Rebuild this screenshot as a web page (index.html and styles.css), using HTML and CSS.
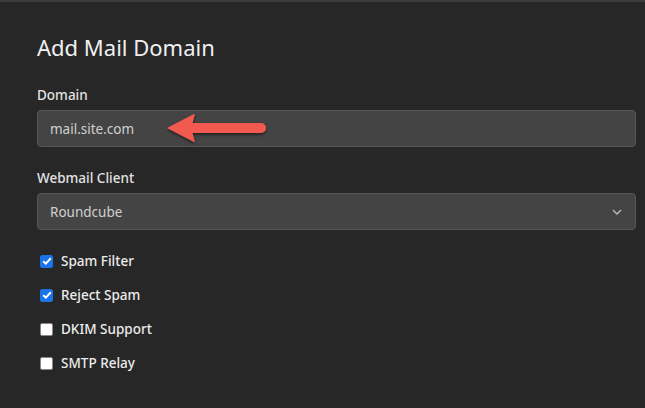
FILE: index.html
```html
<!DOCTYPE html>
<html>
<head>
<meta charset="utf-8">
<link rel="stylesheet" href="styles.css">
</head>
<body>
<div class="page">
  <h1 class="title">Add Mail Domain</h1>
  <div class="field">
    <label class="label">Domain</label>
    <div class="input">
      <span class="value">mail.site.com</span>
      <svg class="arrow" width="110" height="36" viewBox="0 0 110 36">
        <defs>
          <filter id="sh" x="-20%" y="-40%" width="140%" height="180%">
            <feDropShadow dx="0" dy="1.5" stdDeviation="1.5" flood-color="#000" flood-opacity="0.6"/>
          </filter>
        </defs>
        <g filter="url(#sh)">
          <path d="M3 17 L31 2.5 L28.5 12 L97 12 A5 5 0 0 1 97 22 L28.5 22 L31 31.5 Z" fill="#f25a50"/>
        </g>
      </svg>
    </div>
  </div>
  <div class="field">
    <label class="label">Webmail Client</label>
    <div class="input select">
      <span class="value">Roundcube</span>
      <svg class="chev" width="10" height="6" viewBox="0 0 10 6"><path d="M1 1 L5 5 L9 1" fill="none" stroke="#bbb" stroke-width="1.4"/></svg>
    </div>
  </div>
  <div class="checks">
    <div class="check"><span class="box on"><svg width="10" height="8" viewBox="0 0 10 8"><path d="M1.2 4.2 L3.8 6.6 L8.8 1.2" fill="none" stroke="#fff" stroke-width="2"/></svg></span><span>Spam Filter</span></div>
    <div class="check"><span class="box on"><svg width="10" height="8" viewBox="0 0 10 8"><path d="M1.2 4.2 L3.8 6.6 L8.8 1.2" fill="none" stroke="#fff" stroke-width="2"/></svg></span><span>Reject Spam</span></div>
    <div class="check"><span class="box"></span><span>DKIM Support</span></div>
    <div class="check"><span class="box"></span><span>SMTP Relay</span></div>
  </div>
</div>
</body>
</html>
```
FILE: styles.css
```css
html {
  margin: 0;
  padding: 0;
  background: #272727;
  overflow: hidden;
}
body {
  margin: 0;
  padding: 0;
  background: #272727;
  font-family: "Noto Sans", "Open Sans", sans-serif;
  color: #e6e6e6;
  min-height: 100vh;
  border-top: 2px solid #3b3b3b;
  box-sizing: border-box;
}
.page {
  padding: 30px 9px 0 37px;
}
.title {
  margin: 0;
  font-size: 22px;
  font-weight: 400;
  color: #f0f0f0;
  line-height: 30px;
}
.field {
  display: flex;
  flex-direction: column;
}
.title + .field { margin-top: 24px; }
.field + .field { margin-top: 22px; }
.label {
  font-size: 13.5px;
  font-weight: 500;
  color: #e2e2e2;
  line-height: 18px;
  margin-bottom: 6px;
}
.input {
  position: relative;
  height: 35px;
  background: #444444;
  border: 1px solid #575757;
  border-radius: 4px;
  display: flex;
  align-items: center;
  padding: 0 12px;
  font-size: 13.5px;
  color: #d0d0d0;
}
.select {
  justify-content: space-between;
  padding-right: 13px;
}
.arrow {
  position: absolute;
  left: 126px;
  top: 0px;
}
.checks {
  margin-top: 21px;
  display: flex;
  flex-direction: column;
  gap: 14px;
}
.check {
  display: flex;
  align-items: center;
  gap: 8px;
  font-size: 13.5px;
  font-weight: 500;
  color: #ececec;
  line-height: 20px;
  padding-left: 3px;
}
.box {
  width: 13px;
  height: 13px;
  border-radius: 2px;
  background: #ffffff;
  border: 1px solid #888;
  box-sizing: border-box;
  display: flex;
  align-items: center;
  justify-content: center;
}
.box.on {
  background: #1a73e8;
  border-color: #1a73e8;
}
```
